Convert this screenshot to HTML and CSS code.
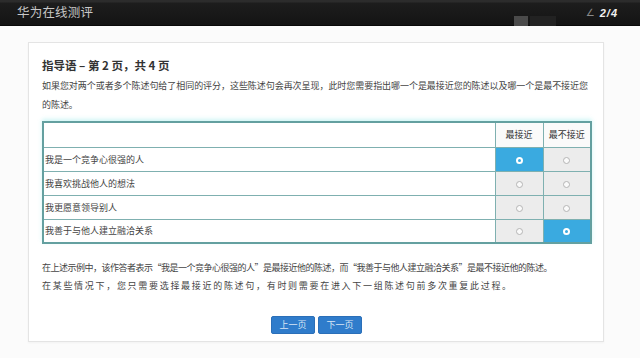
FILE: index.html
```html
<!DOCTYPE html>
<html lang="zh">
<head>
<meta charset="utf-8">
<title>华为在线测评</title>
<link rel="stylesheet" href="styles.css">
</head>
<body>
<header class="topbar">
  <div class="brand">华为在线测评</div>
  <div class="marks"><span class="mk1"></span><span class="mk2"></span></div>
  <div class="pager"><span class="angle">∠</span><span class="num">2/4</span></div>
</header>
<main class="stage">
  <section class="card">
    <h1 class="title">指导语 – 第 2 页，共 4 页</h1>
    <p class="intro">如果您对两个或者多个陈述句给了相同的评分，这些陈述句会再次呈现，此时您需要指出哪一个是最接近您的陈述以及哪一个是最不接近您的陈述。</p>
    <table class="grid">
      <thead>
        <tr><th class="stmt"></th><th class="opt">最接近</th><th class="opt">最不接近</th></tr>
      </thead>
      <tbody>
        <tr><td class="stmt">我是一个竞争心很强的人</td><td class="opt on"><span class="radio sel"></span></td><td class="opt"><span class="radio"></span></td></tr>
        <tr><td class="stmt">我喜欢挑战他人的想法</td><td class="opt"><span class="radio"></span></td><td class="opt"><span class="radio"></span></td></tr>
        <tr><td class="stmt">我更愿意领导别人</td><td class="opt"><span class="radio"></span></td><td class="opt"><span class="radio"></span></td></tr>
        <tr><td class="stmt">我善于与他人建立融洽关系</td><td class="opt"><span class="radio"></span></td><td class="opt on"><span class="radio sel"></span></td></tr>
      </tbody>
    </table>
    <div class="notes">
      <p class="l1">在上述示例中，该作答者表示“我是一个竞争心很强的人”是最接近他的陈述，而“我善于与他人建立融洽关系”是最不接近他的陈述。</p>
      <p class="l2">在某些情况下，您只需要选择最接近的陈述句，有时则需要在进入下一组陈述句前多次重复此过程。</p>
    </div>
    <div class="actions">
      <button class="btn">上一页</button>
      <button class="btn">下一页</button>
    </div>
  </section>
</main>
</body>
</html>
```

FILE: styles.css
```css
* { box-sizing: border-box; }
html, body { margin: 0; padding: 0; }
body {
  width: 640px;
  height: 358px;
  overflow: hidden;
  background: #fbfbfb;
  font-family: "Noto Sans CJK SC", "Liberation Sans", sans-serif;
  color: #333;
}
.topbar {
  position: relative;
  height: 26px;
  display: flex;
  align-items: center;
  padding-left: 17px;
  padding-right: 22px;
  background: linear-gradient(#2c2c2c 0, #2c2c2c 2px, #1d1d1d 3px, #141414 100%);
  border-bottom: 1px solid #0a0a0a;
}
.brand {
  font-size: 12.5px;
  color: #c8c8c8;
  letter-spacing: 0.2px;
  line-height: 1;
}
.marks { position: absolute; left: 514px; top: 16px; display: flex; }
.mk1 { width: 14px; height: 10px; background: #4a4a4a; }
.mk2 { width: 26px; height: 10px; background: #222; margin-left: 2px; }
.pager { margin-left: auto; display: flex; align-items: center; gap: 5px; }
.angle { color: #8a8a8a; font-size: 10px; font-family: "DejaVu Sans", sans-serif; }
.num {
  color: #f0f0f0;
  font-family: "Liberation Sans", sans-serif;
  font-weight: bold;
  font-style: italic;
  font-size: 11px;
  letter-spacing: 1px;
}
.stage {
  padding: 16px 37px 0 28px;
}
.card {
  width: 576px;
  height: 300px;
  background: #fff;
  border: 1px solid #e4e4e4;
  box-shadow: 0 1px 2px rgba(0,0,0,0.04);
  padding: 13px 12px 0 13px;
  display: flex;
  flex-direction: column;
}
.title {
  margin: 0;
  font-size: 11.5px;
  line-height: 18px;
  font-weight: bold;
  color: #333;
}
.intro {
  margin: 2px 0 0;
  font-size: 9px;
  line-height: 19px;
  letter-spacing: -0.05px;
  color: #444;
}
.grid {
  margin-top: 7px;
  width: 550px;
  border-collapse: collapse;
  border: 2px solid #64a0a0;
  box-shadow: 0 -2px 4px rgba(120, 230, 230, 0.35);
  font-size: 9px;
  color: #444;
}
.grid th, .grid td {
  border: 1px solid #7fb0b0;
  padding: 0;
}
.grid thead th { height: 25px; font-weight: normal; }
.grid tbody td { height: 24px; }
.grid .stmt { text-align: left; padding-left: 1px; background: #fff; }
.grid .opt { width: 48px; text-align: center; }
.grid th.opt { background: #fafafa; color: #333; font-size: 9px; }
.grid td.opt { background: #ececec; }
.grid td.opt.on { background: #3aaae0; }
.radio {
  display: inline-block;
  width: 7px;
  height: 7px;
  border-radius: 50%;
  border: 1px solid #b5b5b5;
  background: #fafafa;
  vertical-align: middle;
}
.radio.sel {
  border: 2px solid #fff;
  background: #3aaae0;
}
.notes {
  margin-top: 15px;
  font-size: 9px;
  line-height: 18px;
  color: #444;
}
.notes p { margin: 0; white-space: nowrap; }
.notes .l1 { letter-spacing: -0.5px; }
.notes .l2 { letter-spacing: 1.7px; }
.actions {
  margin-top: 21px;
  display: flex;
  justify-content: center;
  gap: 3px;
}
.btn {
  width: 44px;
  height: 18px;
  padding: 0;
  border: 1px solid #2b6fb8;
  border-radius: 2px;
  background: #2f7ccb;
  color: #d8e6f5;
  font-family: "Noto Sans CJK SC", sans-serif;
  font-size: 9px;
  line-height: 16px;
}
```
